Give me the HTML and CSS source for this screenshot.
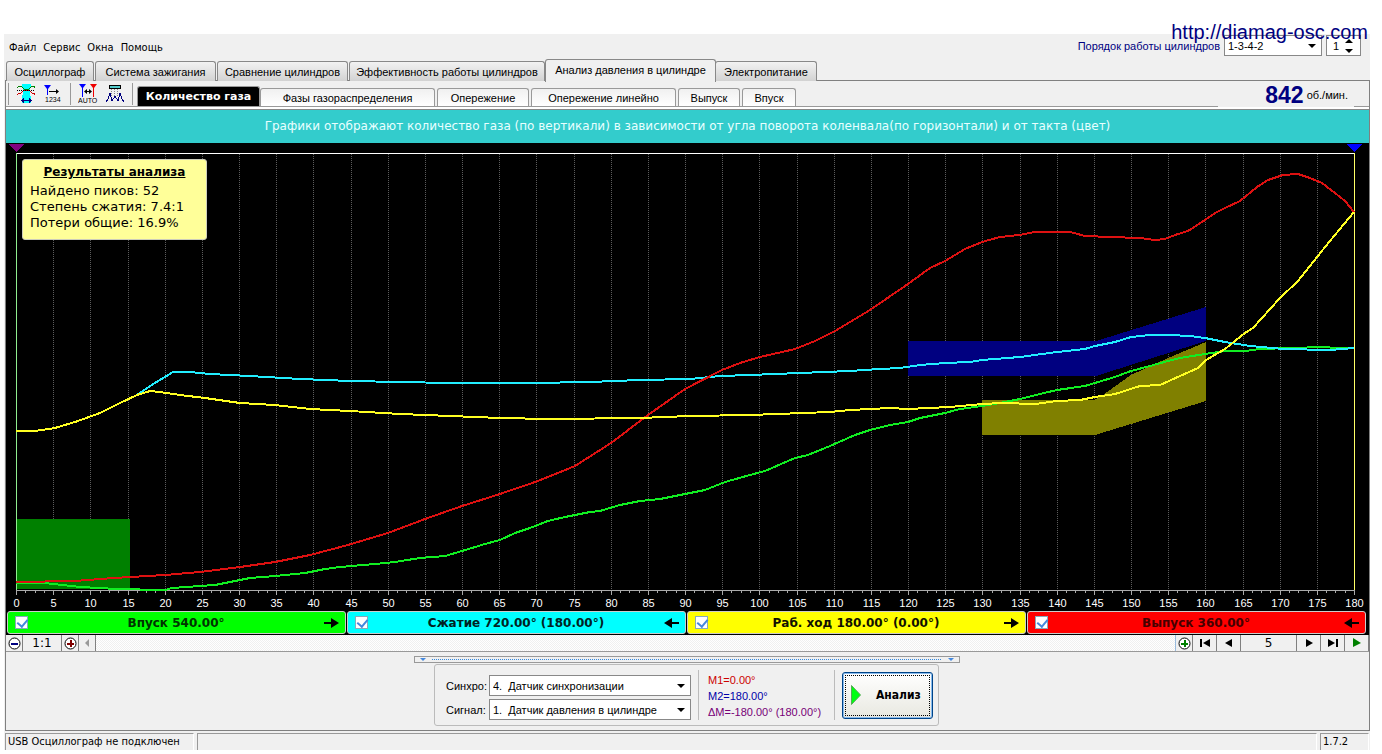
FILE: index.html
```html
<!DOCTYPE html>
<html lang="ru">
<head>
<meta charset="utf-8">
<title>Анализ давления в цилиндре</title>
<link rel="stylesheet" href="styles.css">
</head>
<body>
<div class="app">
  <a class="site-link" href="http://diamag-osc.com">http://diamag-osc.com</a>

  <header class="top">
    <nav class="menu">
      <button type="button">Файл</button>
      <button type="button">Сервис</button>
      <button type="button">Окна</button>
      <button type="button">Помощь</button>
    </nav>
    <div class="order">
      <label for="order">Порядок работы цилиндров</label>
      <span class="combo combo-order"><select id="order"><option>1-3-4-2</option></select></span>
      <span class="spin">
        <input type="text" value="1" aria-label="Номер цилиндра">
        <svg width="9" height="16" viewBox="0 0 9 16"><path d="M4 1L8 5H0zM4 15L0 11H8z"/></svg>
      </span>
    </div>
  </header>

  <nav class="tabs">
    <button type="button" class="tab w-osc">Осциллограф</button>
    <button type="button" class="tab w-ign">Система зажигания</button>
    <button type="button" class="tab w-cmp">Сравнение цилиндров</button>
    <button type="button" class="tab w-eff">Эффективность работы цилиндров</button>
    <button type="button" class="tab w-prs active">Анализ давления в цилиндре</button>
    <button type="button" class="tab w-pow">Электропитание</button>
  </nav>

  <main class="frame">
    <div class="toolbar">
      <div class="tools">
        <i class="sep"></i>
        <button type="button" aria-label="Область">
          <svg width="20" height="20" viewBox="0 0 20 20" shape-rendering="crispEdges">
            <path fill="#0ff" d="M6 0h9v3l-1 2v5l1 3v6H6v-6l1-3V5L6 3z"/>
            <path fill="none" stroke="#008000" d="M1 4l2-2h2l3 3h5l3-3h2l1 2"/>
            <path fill="none" stroke="#c00" d="M1 11l2-2h2l3-3h5l3 3h2l1 2"/>
            <path fill="none" stroke="#000" stroke-dasharray="1 1" d="M1 6.500h18"/>
            <path fill="none" stroke="#000080" d="M6 16.500h9M8 14.500l-2 2 2 2M13 14.500l2 2-2 2"/>
          </svg>
        </button>
        <button type="button" aria-label="Нумерация">
          <svg width="20" height="20" viewBox="0 0 20 20">
            <path fill="#00f" d="M1 1h7L5 5v6H4V5z"/>
            <path d="M6 7h7V5l3 2.500-3 2.500V8H6z"/>
            <text x="2" y="18">1234</text>
          </svg>
        </button>
        <i class="sep"></i>
        <button type="button" aria-label="Авто">
          <svg width="20" height="20" viewBox="0 0 20 20">
            <path fill="#00f" d="M1 0h7L5 4v9H4V4z"/>
            <path fill="#e00" d="M12 0h7l-3 4v9h-1V4z"/>
            <path d="M6 7.500L9 5v2h2V5l3 2.500L11 10V8H9v2z"/>
            <text x="0" y="19">AUTO</text>
          </svg>
        </button>
        <button type="button" aria-label="Пики">
          <svg width="20" height="20" viewBox="0 0 20 20" shape-rendering="crispEdges">
            <path fill="#5cc" stroke="#000" d="M4.500 1.500h11v3h-11z"/>
            <path fill="none" stroke="#888" stroke-dasharray="1 1" d="M6.500 5v8M9.500 5v8M12.500 5v8"/>
            <path fill="none" stroke="#000080" d="M1 18l2-3 2-6 2 8 3-5 3 5 2-8 2 6 2 3"/>
          </svg>
        </button>
        <i class="sep"></i>
      </div>
      <nav class="subtabs">
        <button type="button" class="subtab s-qty active">Количество газа</button>
        <button type="button" class="subtab s-phs">Фазы газораспределения</button>
        <button type="button" class="subtab s-adv">Опережение</button>
        <button type="button" class="subtab s-lin">Опережение линейно</button>
        <button type="button" class="subtab s-out">Выпуск</button>
        <button type="button" class="subtab s-in">Впуск</button>
      </nav>
      <div class="rpm"><b>842</b><span>об./мин.</span></div>
    </div>

    <p class="banner">Графики отображают количество газа (по вертикали) в зависимости от угла поворота коленвала(по горизонтали) и от такта (цвет)</p>

    <section class="chart">
      <svg id="plot" viewBox="6 143 1363 468" shape-rendering="crispEdges">
        <g id="grid"></g>
        <path fill="#008000" d="M17 519H130V589H17z"/>
        <path fill="#000080" d="M908 341H1096L1206 307V341L1096 376H908z"/>
        <path fill="#808000" d="M982 400H1094L1103 395 1131 375 1168 358 1206 342V401L1095 435H982z"/>
        <path class="axis" d="M16 590.500H1354"/>
        <path class="edge-top" d="M16 153.500H1354"/>
        <path class="edge-left" d="M16.500 153V590"/>
        <path class="edge-right" d="M1354.500 153V590"/>
        <path fill="#800080" d="M8 144H24L16 152z"/>
        <path fill="#00f" d="M1346 144H1363L1354 152z"/>
        <polyline class="curve" stroke="#1e2" points="16,583 45,583 62,585 80,587 100,588 115,589 165,590 172,588 200,586 215,585 235,581 250,578 275,576 305,573 325,569 340,567 375,564 395,562 420,558 445,556 462,551 485,544 500,540 515,533 530,528 548,521 565,517 590,512 600,511 620,505 640,501 660,499 690,493 705,490 725,482 750,475 765,471 795,458 808,455 830,446 855,435 870,430 890,425 908,422 920,418 945,413 960,409 982,406 1000,403 1020,399 1040,394 1057,390 1085,386 1095,383 1115,377 1131,371 1150,366 1168,361 1180,358 1205,354 1225,351 1245,351 1260,349 1290,348 1325,347 1335,348 1354,348"/>
        <polyline class="curve" stroke="#2ef" points="16,431 35,431 55,428 75,422 100,413 120,403 137,395 150,386 173,372 190,372 210,374 250,376 300,379 350,381 400,382 450,383 530,383 590,382 640,380 690,379 720,376 750,375 800,373 850,371 880,369 900,368 920,365 945,363 970,362 982,360 1020,357 1057,352 1085,349 1095,346 1115,342 1131,337 1150,335 1170,335 1190,336 1205,338 1225,342 1250,346 1283,349 1330,350 1354,348"/>
        <polyline class="curve" stroke="#d11" points="16,582 75,581 100,579 130,577 165,575 200,572 240,567 275,562 310,555 348,545 388,533 425,519 462,506 500,494 538,481 575,466 611,443 648,415 685,389 722,370 740,363 760,357 795,349 815,341 835,331 870,310 908,284 930,268 945,261 965,249 982,242 1000,237 1019,235 1035,232 1070,232 1085,236 1110,237 1140,238 1155,240 1165,239 1175,235 1188,231 1205,220 1215,213 1225,208 1240,201 1257,187 1268,180 1283,175 1298,174 1310,178 1322,183 1335,193 1345,201 1354,212"/>
        <polyline class="curve" stroke="#ff2" points="16,431 35,431 55,428 75,422 100,413 120,403 137,395 150,391 160,392 180,395 205,398 240,403 275,405 310,409 350,411 400,414 450,416 500,418 550,419 640,418 690,416 750,415 830,412 850,410 890,408 908,409 950,407 982,404 1003,403 1035,404 1057,401 1080,400 1095,397 1115,394 1140,386 1160,385 1180,376 1198,368 1206,360 1225,349 1245,333 1253,328 1280,298 1298,281 1325,247 1354,212"/>
      </svg>
      <aside class="results">
        <h2>Результаты анализа</h2>
        <p>Найдено пиков: 52</p>
        <p>Степень сжатия: 7.4:1</p>
        <p>Потери общие: 16.9%</p>
      </aside>
    </section>

    <div class="strokes">
      <label class="stroke intake"><input type="checkbox" checked><span>Впуск 540.00°</span>
        <svg width="15" height="10" viewBox="0 0 15 10"><path d="M0 4h7V0l8 5-8 5V6H0z"/></svg></label>
      <label class="stroke compress"><input type="checkbox" checked><span>Сжатие 720.00° (180.00°)</span>
        <svg width="15" height="10" viewBox="0 0 15 10"><path d="M15 4H8V0L0 5l8 5V6h7z"/></svg></label>
      <label class="stroke power"><input type="checkbox" checked><span>Раб. ход 180.00° (0.00°)</span>
        <svg width="15" height="10" viewBox="0 0 15 10"><path d="M0 4h7V0l8 5-8 5V6H0z"/></svg></label>
      <label class="stroke exhaust"><input type="checkbox" checked><span>Выпуск 360.00°</span>
        <svg width="15" height="10" viewBox="0 0 15 10"><path d="M15 4H8V0L0 5l8 5V6h7z"/></svg></label>
    </div>

    <div class="scrollrow">
      <button type="button" class="b17" aria-label="Уменьшить"><svg width="13" height="13" viewBox="0 0 13 13"><circle cx="6.500" cy="6.500" r="5.500" fill="#fff" stroke="#000"/><path fill="#000080" d="M3 6h7v2H3z"/></svg></button>
      <button type="button" class="scale">1:1</button>
      <button type="button" class="b17" aria-label="Увеличить"><svg width="13" height="13" viewBox="0 0 13 13"><circle cx="6.500" cy="6.500" r="5.500" fill="#fff" stroke="#000"/><path fill="#800000" d="M3 6h3V3h2v3h2v2H8v2H6V8H3z"/></svg></button>
      <button type="button" class="b17" aria-label="Влево"><svg width="8" height="8" viewBox="0 0 8 8"><path fill="#999" d="M6 0v8L2 4z"/></svg></button>
      <div class="track"></div>
      <button type="button" class="b17" aria-label="Добавить"><svg width="13" height="13" viewBox="0 0 13 13"><circle cx="6.500" cy="6.500" r="5.500" fill="#fff" stroke="#000"/><path fill="#008000" d="M3 6h3V3h2v3h2v2H8v2H6V8H3z"/></svg></button>
      <button type="button" class="b24" aria-label="Первый"><svg width="10" height="8" viewBox="0 0 10 8"><path d="M0 0h2v8H0zM10 0v8L3 4z"/></svg></button>
      <button type="button" class="b24" aria-label="Предыдущий"><svg width="10" height="8" viewBox="0 0 10 8"><path d="M8 0v8L1 4z"/></svg></button>
      <output class="page">5</output>
      <button type="button" class="b24" aria-label="Следующий"><svg width="10" height="8" viewBox="0 0 10 8"><path d="M2 0v8l7-4z"/></svg></button>
      <button type="button" class="b24" aria-label="Последний"><svg width="10" height="8" viewBox="0 0 10 8"><path d="M8 0h2v8H8zM0 0v8l7-4z"/></svg></button>
      <button type="button" class="b24" aria-label="Пуск"><svg width="10" height="10" viewBox="0 0 10 10"><path fill="#008000" d="M1 0v9l8-4z"/></svg></button>
    </div>

    <div class="bottom">
      <div class="splitter"></div>
      <form class="panel">
        <div class="fields">
          <label for="sync">Синхро:</label>
          <span class="combo"><select id="sync"><option>4.&nbsp; Датчик синхронизации</option></select></span>
          <label for="signal">Сигнал:</label>
          <span class="combo"><select id="signal"><option>1.&nbsp; Датчик давления в цилиндре</option></select></span>
        </div>
        <div class="marks">
          <span class="m1">M1=0.00°</span>
          <span class="m2">M2=180.00°</span>
          <span class="dm">ΔM=-180.00° (180.00°)</span>
        </div>
        <button type="button" class="run">
          <svg width="10" height="20" viewBox="0 0 10 20"><path fill="#0f1" stroke="#5a5" d="M.5 .5v19l9-9.500z"/></svg>
          <span>Анализ</span>
        </button>
      </form>
    </div>
  </main>

  <footer class="status">
    <span class="st-dev">USB Осциллограф не подключен</span>
    <span class="st-mid"></span>
    <span class="st-ver">1.7.2</span>
  </footer>
</div>
<script src="chart.js"></script>
</body>
</html>
```
FILE: styles.css
```css
* { box-sizing: border-box; }
body {
  margin: 0;
  background: #fff;
  color: #000;
  font: 11px/14px "Liberation Sans", Arial, sans-serif;
}
button, select, input { font: inherit; color: inherit; }
button { padding: 0; border: 0; background: none; }
svg { display: block; }
.app {
  position: relative;
  margin: 34px 12px 0 4px;
  background: #f0f0f0;
}
.site-link {
  position: absolute;
  right: 2px;
  top: -13px;
  z-index: 1;
  color: #000080;
  font-size: 20px;
  line-height: 23px;
  text-decoration: none;
}

.top { display: flex; justify-content: space-between; height: 24px; }
.menu { display: flex; gap: 7px; padding: 3px 0 0 5px; font-family: "DejaVu Sans Condensed", "DejaVu Sans", sans-serif; }
.order { display: flex; align-items: center; gap: 4px; padding-right: 9px; height: 23px; }
.order label { color: #000080; }
.combo { position: relative; display: block; }
.combo::after {
  content: "";
  position: absolute;
  right: 6px;
  top: 9px;
  border: 4px solid transparent;
  border-top-color: #000;
  border-bottom: 0;
}
.combo select {
  display: block;
  width: 100%;
  height: 21px;
  padding: 0 3px;
  border: 1px solid #888;
  border-radius: 0;
  background: #fff;
  appearance: none;
}
.combo-order { width: 98px; }
.spin {
  display: flex;
  align-items: center;
  width: 35px;
  height: 21px;
  padding-right: 6px;
  border: 1px solid #888;
  background: #fff;
}
.spin input { flex: 1; min-width: 0; width: 10px; padding: 0 0 0 6px; border: 0; background: none; }

.tabs { display: flex; align-items: flex-end; padding-left: 2px; height: 23px; }
.tab {
  height: 20px;
  margin-right: 1px;
  border: 1px solid #888;
  border-bottom: 0;
  border-radius: 3px 3px 0 0;
  background: linear-gradient(#f2f2f2, #d2d2d2);
  white-space: nowrap;
}
.tab.active { height: 23px; margin: 0 -1px -1px -1px; background: #f0f0f0; z-index: 1; padding-bottom: 2px; }
.w-osc { width: 88px; }
.w-ign { width: 121px; }
.w-cmp { width: 131px; }
.w-eff { width: 196px; }
.w-prs { width: 171px; }
.w-pow { width: 102px; }

.frame { margin: -1px 0 0 1px; border: 1px solid #808080; }
.toolbar { display: flex; align-items: flex-end; height: 26px; border-bottom: 1px solid #999; }
.tools { display: flex; align-items: center; gap: 7px; align-self: center; width: 131px; padding-left: 2px; }
.tools text { font: 7px "Liberation Sans", sans-serif; }
.tools button { width: 20px; }
.sep { width: 1px; height: 22px; background: #999; }
.subtabs { display: flex; align-items: flex-end; }
.subtab {
  height: 18px;
  margin-right: 2px;
  border: 1px solid #999;
  border-bottom: 0;
  border-radius: 3px 3px 0 0;
  background: linear-gradient(#f0f0f0, #fff);
  white-space: nowrap;
}
.subtab.active { height: 20px; margin-right: 0; background: #000; color: #fff; font: bold 11px "DejaVu Sans", sans-serif; }
.s-qty { width: 123px; }
.s-phs { width: 175px; }
.s-adv { width: 92px; }
.s-lin { width: 145px; }
.s-out { width: 62px; }
.s-in { width: 54px; }
.rpm {
  display: flex;
  align-items: center;
  justify-content: flex-end;
  gap: 3px;
  width: 136px;
  height: 26px;
  margin: 0 15px -1px auto;
  padding: 2px 6px 0 0;
  background: #f0f0f0;
}
.rpm b { color: #000080; font-size: 23px; line-height: 24px; }
.banner {
  margin: 2px 0 0;
  padding: 8px;
  border-top: 1px solid #888;
  outline: 2px solid #fff;
  outline-offset: 0;
  clip-path: inset(-2px 0 0 0);
  background: #3cc;
  color: #e8ffff;
  font: 12px/17px "DejaVu Sans", Verdana, sans-serif;
  text-align: center;
}

.chart { position: relative; background: #000; }
.chart > svg { width: 100%; height: auto; }
.chart text { fill: #fff; font-size: 11px; text-anchor: middle; }
.curve { fill: none; stroke-width: 2; }
.grid { stroke: #5c5c5c; stroke-dasharray: 1 1; }
.axis, .tick { stroke: #aaa; }
.edge-top { stroke: #fff; }
.edge-left { stroke: #90ee90; }
.edge-right { stroke: #ff6; }
.results {
  position: absolute;
  left: 16px;
  top: 16px;
  width: 185px;
  height: 81px;
  padding: 4px 7px;
  border: 1px solid #ccb;
  border-radius: 3px;
  background: #ff9;
  font: 13px/16px "DejaVu Sans", Verdana, sans-serif;
}
.results h2 { margin: 0 0 3px; font-size: 12px; text-align: center; text-decoration: underline; }
.results p { margin: 0; }

.strokes { display: flex; gap: 1px; padding: 0 3px 1px 1px; background: #000; }
.stroke {
  display: flex;
  flex: 1;
  align-items: center;
  height: 23px;
  padding: 0 6px 0 7px;
  border: 1px solid #ccc;
  border-radius: 3px;
  font: bold 12px/16px "DejaVu Sans", Verdana, sans-serif;
}
.stroke span { flex: 1; text-align: center; }
.stroke input {
  appearance: none;
  width: 13px;
  height: 13px;
  margin: 0;
  border: 1px solid #8ab;
  background: #fff;
}
.stroke input:checked::before {
  content: "";
  display: block;
  width: 5px;
  height: 8px;
  margin: 0 0 0 3px;
  border: solid #48d;
  border-width: 0 2px 2px 0;
  transform: rotate(40deg);
}
.intake { background: #0f0; color: #030; }
.compress { background: #0ff; color: #022; }
.power { background: #ff0; color: #110; }
.exhaust { background: #f00; color: #400; }

.scrollrow { display: flex; height: 17px; border-bottom: 1px solid #999; }
.scrollrow button, .page {
  display: flex;
  align-items: center;
  justify-content: center;
  flex: none;
  border-right: 1px solid #808080;
  background: #f0f0f0;
}
.scrollrow .b17 { width: 17px; }
.scrollrow .b24 { width: 24px; }
.scrollrow .scale { width: 39px; font: 12px/14px "DejaVu Sans", sans-serif; }
.page { width: 56px; font: 12px/14px "DejaVu Sans", sans-serif; }
.track { flex: 1; background: repeating-conic-gradient(#f0f0f0 0 25%, #fff 0 50%) 0 0 / 2px 2px; border-right: 1px solid #9bd; }

.bottom { display: flex; flex-direction: column; align-items: center; padding: 4px 2px 4px 0; }
.splitter {
  position: relative;
  width: 546px;
  height: 7px;
  border: 1px solid #999;
  background: repeating-linear-gradient(90deg, #38d 0 1px, #f0f0f0 1px 2px) center / 510px 1px no-repeat;
}
.splitter::before, .splitter::after {
  content: "";
  position: absolute;
  top: 1px;
  border: 3px solid transparent;
  border-top-color: #48d;
  border-bottom: 0;
}
.splitter::before { left: 5px; }
.splitter::after { right: 5px; }
.panel {
  display: flex;
  align-items: center;
  width: 505px;
  height: 62px;
  margin-top: 1px;
  padding: 0 5px 0 11px;
  border: 1px solid #bbb;
  border-radius: 3px;
}
.fields { display: grid; grid-template-columns: 39px 202px; gap: 3px 4px; align-items: center; padding-top: 5px; }
.marks {
  display: flex;
  flex-direction: column;
  justify-content: flex-end;
  width: 137px;
  height: 50px;
  margin: 0 7px;
  padding-left: 9px;
  border: solid #bbb;
  border-width: 0 1px;
  line-height: 16px;
  white-space: nowrap;
}
.m1 { color: #c00; }
.m2 { color: #00a; }
.dm { color: #707; }
.run {
  display: flex;
  align-items: center;
  gap: 15px;
  width: 91px;
  height: 47px;
  padding-left: 8px;
  border: 1px solid #048;
  border-radius: 3px;
  background: linear-gradient(#fff, #e8e8e0);
  box-shadow: inset 0 0 0 1px #8be;
  outline: 1px dotted #000;
  outline-offset: -4px;
  font: bold 12px/16px "DejaVu Sans Condensed", "DejaVu Sans", sans-serif;
}

.status {
  display: flex;
  gap: 3px;
  margin-top: 2px;
  padding: 0 1px;
  height: 17px;
  font: 11px/16px "DejaVu Sans Condensed", "DejaVu Sans", sans-serif;
}
.status span { border: solid #999; border-width: 1px 0 0 1px; border-right: 1px solid #fff; padding-left: 2px; }
.st-dev { width: 189px; }
.st-mid { flex: 1; }
.st-ver { width: 49px; }
```
FILE: chart.js
```js
// Builds the angle scale: dotted grid lines, ticks and labels from 0 to 180 degrees.
const NS = 'http://www.w3.org/2000/svg';
const grid = document.getElementById('grid');
const LEFT = 16, RIGHT = 1354, TOP = 154, BASE = 590;

function add(name, attrs, text) {
  const node = document.createElementNS(NS, name);
  for (const key in attrs) node.setAttribute(key, attrs[key]);
  if (text !== undefined) node.textContent = text;
  grid.appendChild(node);
}

for (let i = 0; i <= 144; i++) {
  const x = Math.round(LEFT + (RIGHT - LEFT) * i / 144) + 0.5;
  const major = i % 4 === 0;
  if (major && i > 0 && i < 144) add('path', { class: 'grid', d: `M${x} ${TOP}V${BASE}` });
  add('path', { class: 'tick', d: `M${x} ${BASE}v${major ? 5 : 3}` });
  if (major) add('text', { x, y: 607 }, i / 4 * 5);
}
```
